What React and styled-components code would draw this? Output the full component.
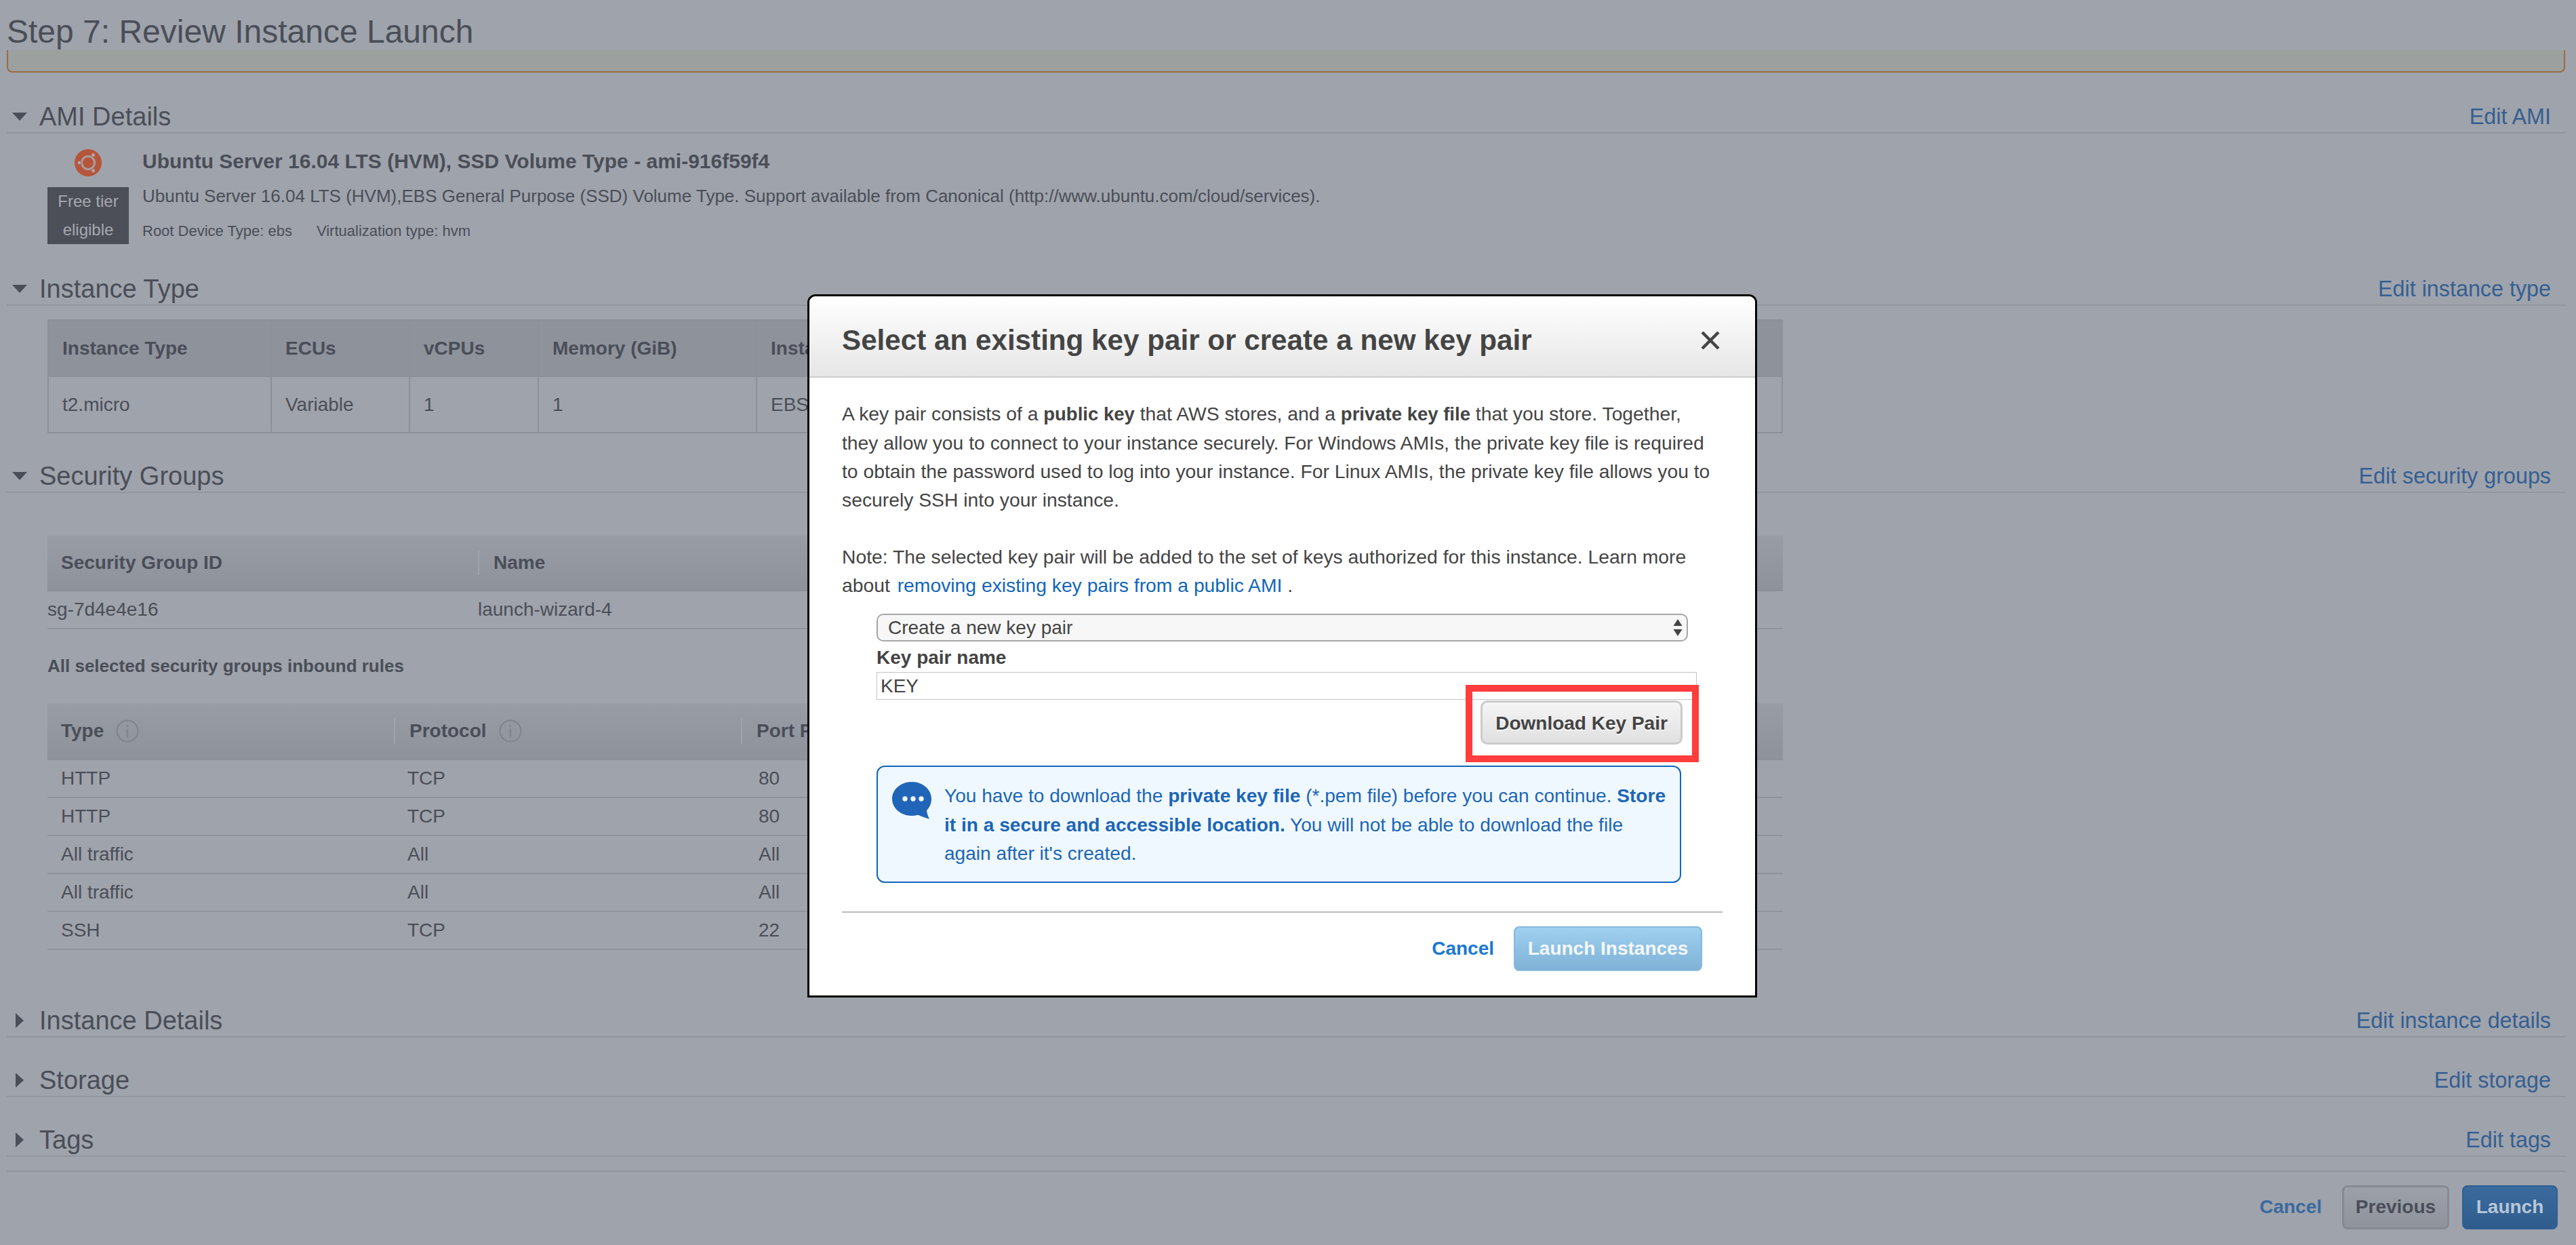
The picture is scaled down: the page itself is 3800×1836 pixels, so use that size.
import React from "react";
import styled, { createGlobalStyle } from "styled-components";

const GlobalStyle = createGlobalStyle`
  html, body {
    margin: 0;
    padding: 0;
    background: #9fa3ab;
  }
  * {
    box-sizing: border-box;
  }
`;

const instanceRows = [["t2.micro", "Variable", "1", "1", "EBS only"]];

const ruleRows = [
  ["HTTP", "TCP", "80"],
  ["HTTP", "TCP", "80"],
  ["All traffic", "All", "All"],
  ["All traffic", "All", "All"],
  ["SSH", "TCP", "22"],
];

const UbuntuLogo = () => (
  <LogoSvg viewBox="0 0 40 40">
    <circle cx="20" cy="20" r="20" fill="#b5563c" />
    <circle cx="20" cy="20" r="9.5" fill="none" stroke="#a99f9f" strokeWidth="3" />
    <circle cx="27.5" cy="8.5" r="3" fill="#b0a8a9" stroke="#b5563c" strokeWidth="1" />
    <circle cx="7" cy="20" r="3" fill="#b0a8a9" stroke="#b5563c" strokeWidth="1" />
    <circle cx="27.5" cy="31.5" r="3" fill="#b0a8a9" stroke="#b5563c" strokeWidth="1" />
  </LogoSvg>
);

const InfoIcon = () => (
  <InfoSvg viewBox="0 0 34 34">
    <circle cx="17" cy="17" r="15.5" fill="none" stroke="#80848d" strokeWidth="2" />
    <circle cx="17" cy="9.5" r="1.6" fill="#80848d" />
    <rect x="15.8" y="13.5" width="2.4" height="13" fill="#80848d" />
  </InfoSvg>
);

const BubbleIcon = () => (
  <BubbleSvg viewBox="0 0 58 55">
    <path
      d="M29 0C13 0 0 11 0 25c0 14 13 25 29 25 3 0 6-.4 9-1.200 4 1.500 9 3.700 17 6-2-4-3.500-8-4-12.500C55 38 58 32 58 25 58 11 45 0 29 0z"
      fill="#2065b8"
    />
    <circle cx="19" cy="25" r="3.700" fill="#f0f8ff" />
    <circle cx="31" cy="25" r="3.700" fill="#f0f8ff" />
    <circle cx="43" cy="25" r="3.700" fill="#f0f8ff" />
  </BubbleSvg>
);

const SelectArrows = () => (
  <ArrowsSvg viewBox="0 0 14 25">
    <path d="M7 0l6.500 10H.5z" fill="#444" />
    <path d="M7 25l6.500-10H.5z" fill="#444" />
  </ArrowsSvg>
);

const SectionHeader = ({ title, edit, open }) => (
  <Header>
    <ArrowSlot>
      <Arrow $open={open} />
    </ArrowSlot>
    <SectionTitle>{title}</SectionTitle>
    <EditLink>{edit}</EditLink>
  </Header>
);

const App = () => (
  <Page>
    <GlobalStyle />
    <PageTitle>Step 7: Review Instance Launch</PageTitle>
    <WarningBox />

    <Section>
      <SectionHeader title="AMI Details" edit="Edit AMI" open />
      <AmiBody>
        <AmiBadge>
          <UbuntuLogo />
          <FreeTier>
            Free tier
            <br />
            eligible
          </FreeTier>
        </AmiBadge>
        <AmiInfo>
          <AmiName>Ubuntu Server 16.04 LTS (HVM), SSD Volume Type - ami-916f59f4</AmiName>
          <AmiDesc>
            Ubuntu Server 16.04 LTS (HVM),EBS General Purpose (SSD) Volume Type. Support available
            from Canonical (http://www.ubuntu.com/cloud/services).
          </AmiDesc>
          <AmiMeta>
            <span>Root Device Type: ebs</span>
            <span>Virtualization type: hvm</span>
          </AmiMeta>
        </AmiInfo>
      </AmiBody>
    </Section>

    <Section>
      <SectionHeader title="Instance Type" edit="Edit instance type" open />
      <BoxedTable>
        <colgroup>
          <Col $w={329} />
          <Col $w={204} />
          <Col $w={190} />
          <Col $w={322} />
          <col />
        </colgroup>
        <thead>
          <tr>
            <BoxedTh>Instance Type</BoxedTh>
            <BoxedTh>ECUs</BoxedTh>
            <BoxedTh>vCPUs</BoxedTh>
            <BoxedTh>Memory (GiB)</BoxedTh>
            <BoxedTh>Instance Storage (GB)</BoxedTh>
          </tr>
        </thead>
        <tbody>
          {instanceRows.map((row) => (
            <tr key={row[0]}>
              {row.map((cell, i) => (
                <BoxedTd key={i}>{cell}</BoxedTd>
              ))}
            </tr>
          ))}
        </tbody>
      </BoxedTable>
    </Section>

    <Section>
      <SectionHeader title="Security Groups" edit="Edit security groups" open />
      <GroupTable>
        <colgroup>
          <Col $w={635} />
          <col />
        </colgroup>
        <thead>
          <tr>
            <GridTh>Security Group ID</GridTh>
            <GridTh $sep>Name</GridTh>
          </tr>
        </thead>
        <tbody>
          <tr>
            <GroupTd>sg-7d4e4e16</GroupTd>
            <GroupTd>launch-wizard-4</GroupTd>
          </tr>
        </tbody>
      </GroupTable>
      <RulesLabel>All selected security groups inbound rules</RulesLabel>
      <RulesTable>
        <colgroup>
          <Col $w={511} />
          <Col $w={512} />
          <col />
        </colgroup>
        <thead>
          <tr>
            <RulesTh>
              <ThInner>
                Type <InfoIcon />
              </ThInner>
            </RulesTh>
            <RulesTh $sep>
              <ThInner>
                Protocol <InfoIcon />
              </ThInner>
            </RulesTh>
            <RulesTh $sep>Port Range</RulesTh>
          </tr>
        </thead>
        <tbody>
          {ruleRows.map((row, i) => (
            <tr key={i}>
              <RulesTd>{row[0]}</RulesTd>
              <RulesTd>{row[1]}</RulesTd>
              <RulesTd $port>{row[2]}</RulesTd>
            </tr>
          ))}
        </tbody>
      </RulesTable>
    </Section>

    <CollapsedSection>
      <SectionHeader title="Instance Details" edit="Edit instance details" />
    </CollapsedSection>
    <Section>
      <SectionHeader title="Storage" edit="Edit storage" />
    </Section>
    <Section>
      <SectionHeader title="Tags" edit="Edit tags" />
    </Section>

    <PageFooter>
      <PageCancel>Cancel</PageCancel>
      <PreviousButton>Previous</PreviousButton>
      <LaunchButton>Launch</LaunchButton>
    </PageFooter>

    <Modal>
      <ModalHeader>
        <ModalTitle>Select an existing key pair or create a new key pair</ModalTitle>
        <CloseIcon viewBox="0 0 28 26">
          <path d="M2 1l24 24M26 1L2 25" stroke="#444" strokeWidth="4.400" fill="none" />
        </CloseIcon>
      </ModalHeader>
      <ModalBody>
        <Paragraph>
          A key pair consists of a <b>public key</b> that AWS stores, and a <b>private key file</b>{" "}
          that you store. Together,
          <br />
          they allow you to connect to your instance securely. For Windows AMIs, the private key
          file is required
          <br />
          to obtain the password used to log into your instance. For Linux AMIs, the private key
          file allows you to
          <br />
          securely SSH into your instance.
        </Paragraph>
        <Paragraph>
          Note: The selected key pair will be added to the set of keys authorized for this instance.
          Learn more
          <br />
          about <BodyLink>removing existing key pairs from a public AMI</BodyLink> .
        </Paragraph>

        <KeyForm>
          <FakeSelect>
            Create a new key pair
            <SelectArrows />
          </FakeSelect>
          <FieldLabel>Key pair name</FieldLabel>
          <FakeInput>KEY</FakeInput>
          <DownloadRow>
            <Highlight>
              <DownloadButton>Download Key Pair</DownloadButton>
            </Highlight>
          </DownloadRow>
          <InfoBox>
            <BubbleIcon />
            <InfoText>
              You have to download the <b>private key file</b> (*.pem file) before you can continue.{" "}
              <b>Store</b>
              <br />
              <b>it in a secure and accessible location.</b> You will not be able to download the
              file
              <br />
              again after it's created.
            </InfoText>
          </InfoBox>
        </KeyForm>

        <ModalFooter>
          <ModalCancel>Cancel</ModalCancel>
          <LaunchInstances>Launch Instances</LaunchInstances>
        </ModalFooter>
      </ModalBody>
    </Modal>
  </Page>
);

const Page = styled.div`
  position: relative;
  width: 3800px;
  height: 1836px;
  padding: 0 16px 0 10px;
  overflow: hidden;
  background: #9fa3ab;
  color: #4a4e58;
  font-family: "Liberation Sans", Arial, sans-serif;
`;

const PageTitle = styled.h1`
  margin: 0;
  height: 74px;
  padding-top: 21px;
  font-size: 48px;
  line-height: 52px;
  font-weight: 400;
`;

const WarningBox = styled.div`
  height: 33px;
  background: #9ca09e;
  border: 2px solid #9a6c44;
  border-top: none;
  border-radius: 0 0 8px 8px;
  margin-bottom: 30px;
`;

const Section = styled.section`
  margin-bottom: 28px;
`;

const CollapsedSection = styled(Section)`
  margin-top: 69px;
`;

const Header = styled.div`
  display: flex;
  align-items: center;
  height: 60px;
  padding: 12px 21px 0 0;
  border-bottom: 2px solid #92969f;
`;

const ArrowSlot = styled.div`
  display: flex;
  justify-content: center;
  width: 23px;
  margin: 0 18px 0 7px;
`;

const Arrow = styled.i`
  display: block;
  width: 0;
  height: 0;
  border-style: solid;
  ${(p) =>
    p.$open
      ? `border-width: 12px 11.5px 0 11.5px; border-color: #4a4e58 transparent transparent transparent;`
      : `border-width: 11.5px 0 11.5px 12px; border-color: transparent transparent transparent #4a4e58;`}
`;

const SectionTitle = styled.h2`
  flex: 1;
  margin: 0;
  font-size: 38px;
  line-height: 48px;
  font-weight: 400;
`;

const EditLink = styled.a`
  color: #355f92;
  font-size: 32.3px;
  line-height: 48px;
`;

const AmiBody = styled.div`
  display: flex;
  height: 166px;
  padding: 23px 0 0 60px;
`;

const AmiBadge = styled.div`
  display: flex;
  flex-direction: column;
  align-items: center;
  gap: 16px;
  width: 120px;
  margin-right: 20px;
`;

const LogoSvg = styled.svg`
  display: block;
  width: 40px;
  height: 40px;
`;

const FreeTier = styled.div`
  width: 120px;
  height: 84px;
  background: #4c4f58;
  color: #a6a9b0;
  font-size: 24px;
  line-height: 42px;
  text-align: center;
`;

const AmiInfo = styled.div`
  display: flex;
  flex-direction: column;
`;

const AmiName = styled.div`
  height: 36px;
  font-size: 30px;
  line-height: 36px;
  font-weight: 700;
`;

const AmiDesc = styled.div`
  margin-top: 15px;
  font-size: 26px;
  line-height: 36px;
`;

const AmiMeta = styled.div`
  display: flex;
  gap: 36px;
  margin-top: 18px;
  font-size: 22px;
  line-height: 32px;
`;

const Col = styled.col`
  width: ${(p) => p.$w}px;
`;

const BoxedTable = styled.table`
  width: 2560px;
  margin: 20px 0 0 60px;
  table-layout: fixed;
  border-collapse: collapse;
  font-size: 28px;
`;

const BoxedTh = styled.th`
  height: 83px;
  padding: 0 20px;
  border: 2px solid #8c9099;
  background: #8e929b;
  text-align: left;
  font-weight: 700;
`;

const BoxedTd = styled.td`
  height: 83px;
  padding: 0 20px;
  border: 2px solid #8c9099;
`;

const GroupTable = styled.table`
  width: 2560px;
  margin: 63px 0 0 60px;
  table-layout: fixed;
  border-collapse: collapse;
  font-size: 28px;
`;

const GridTh = styled.th`
  position: relative;
  height: 81px;
  padding: 0 0 0 ${(p) => (p.$sep ? "23px" : "20px")};
  background: linear-gradient(#989ca5, #8e929b);
  border-bottom: 2px solid #8c9099;
  text-align: left;
  font-weight: 700;
  ${(p) =>
    p.$sep &&
    `&::before {
      content: "";
      position: absolute;
      left: 0;
      top: 22px;
      bottom: 22px;
      width: 2px;
      background: #a0a4ac;
    }`}
`;

const GroupTd = styled.td`
  height: 56px;
  padding: 0;
  border-bottom: 2px solid #8f939c;
`;

const RulesLabel = styled.div`
  margin: 38px 0 0 60px;
  font-size: 26px;
  line-height: 32px;
  font-weight: 700;
`;

const RulesTable = styled(GroupTable)`
  margin-top: 39px;
`;

const RulesTh = styled(GridTh)`
  height: 83px;
`;

const ThInner = styled.span`
  display: inline-flex;
  align-items: center;
  gap: 18px;
`;

const InfoSvg = styled.svg`
  display: block;
  width: 34px;
  height: 34px;
`;

const RulesTd = styled.td`
  height: 56px;
  padding: 0 0 0 ${(p) => (p.$port ? "26px" : "20px")};
  border-bottom: 2px solid #8f939c;
`;

const PageFooter = styled.div`
  display: flex;
  justify-content: flex-end;
  align-items: center;
  height: 86px;
  margin-top: -8px;
  padding: 20px 11px 0 0;
  border-top: 2px solid #92969f;
`;

const PageCancel = styled.a`
  margin-right: 30px;
  color: #3a6a9f;
  font-size: 28px;
  font-weight: 700;
`;

const PageButton = styled.button`
  height: 65px;
  padding: 0;
  border-radius: 8px;
  font-family: inherit;
  font-size: 28px;
  font-weight: 700;
`;

const PreviousButton = styled(PageButton)`
  width: 158px;
  margin-right: 19px;
  background: linear-gradient(#9ca0a9, #8f939c);
  border: 3px solid #868a93;
  color: #4a4e58;
`;

const LaunchButton = styled(PageButton)`
  width: 141px;
  background: linear-gradient(#3b6a9e, #2f5d8d);
  border: 2px solid #2d5e96;
  color: #b8c6d8;
`;

const Modal = styled.div`
  position: absolute;
  left: 1191px;
  top: 434px;
  width: 1401px;
  height: 1037px;
  display: flex;
  flex-direction: column;
  border: 3px solid #000;
  border-radius: 12px 12px 0 0;
  background: #fff;
  color: #444;
`;

const ModalHeader = styled.div`
  display: flex;
  align-items: center;
  justify-content: space-between;
  height: 120px;
  padding: 12px 52px 0 48px;
  background: linear-gradient(#fff, #e6e6e6);
  border-bottom: 2px solid #ccc;
  border-radius: 9px 9px 0 0;
`;

const ModalTitle = styled.h3`
  margin: 0;
  font-size: 42.2px;
  font-weight: 700;
`;

const CloseIcon = styled.svg`
  display: block;
  width: 28px;
  height: 26px;
`;

const ModalBody = styled.div`
  flex: 1;
  padding: 32px 48px 0;
`;

const Paragraph = styled.p`
  margin: 0 0 42px;
  font-size: 28.3px;
  line-height: 42px;
  white-space: nowrap;
  b {
    font-size: 27.5px;
  }
  &:nth-of-type(2) {
    margin-bottom: 21px;
  }
`;

const BodyLink = styled.a`
  margin-left: 3px;
  color: #1166bb;
`;

const KeyForm = styled.div`
  margin-left: 51px;
`;

const FakeSelect = styled.div`
  display: flex;
  align-items: center;
  justify-content: space-between;
  width: 1197px;
  height: 41px;
  padding: 0 6px 0 15px;
  background: #f7f7f7;
  border: 2px solid #a6a6a6;
  border-radius: 10px;
  font-size: 28px;
`;

const ArrowsSvg = styled.svg`
  display: block;
  width: 14px;
  height: 25px;
`;

const FieldLabel = styled.div`
  height: 45px;
  font-size: 28px;
  line-height: 47px;
  font-weight: 700;
`;

const FakeInput = styled.div`
  width: 1210px;
  height: 41px;
  padding-left: 5px;
  border: 1px solid #c4c4c4;
  font-size: 28px;
  line-height: 39px;
`;

const DownloadRow = styled.div`
  display: flex;
  justify-content: flex-end;
  width: 1189px;
  margin-top: 1px;
`;

const Highlight = styled.div`
  position: relative;
  &::after {
    content: "";
    position: absolute;
    inset: -23px -24px -26px -22px;
    border: 10px solid #ff3d3d;
    pointer-events: none;
  }
`;

const DownloadButton = styled.button`
  display: block;
  width: 298px;
  height: 65px;
  padding: 2px 0 0;
  background: linear-gradient(#f5f5f5, #e0e0e0);
  border: 3px solid #cbcbcb;
  border-radius: 10px;
  color: #444;
  font-family: inherit;
  font-size: 28px;
  font-weight: 700;
  text-shadow: 0 2px 0 #fff;
`;

const InfoBox = styled.div`
  display: flex;
  gap: 19px;
  width: 1187px;
  height: 173px;
  margin-top: 31px;
  padding: 22px 0 0 21px;
  background: #f0f8ff;
  border: 2px solid #1166bb;
  border-radius: 12px;
`;

const BubbleSvg = styled.svg`
  display: block;
  flex: none;
  width: 58px;
  height: 55px;
`;

const InfoText = styled.div`
  color: #1c66b6;
  font-size: 28.1px;
  line-height: 42.5px;
  white-space: nowrap;
`;

const ModalFooter = styled.div`
  display: flex;
  align-items: center;
  justify-content: flex-end;
  height: 88px;
  margin-top: 42px;
  padding: 19px 30px 0 0;
  border-top: 2px solid #bbb;
`;

const ModalCancel = styled.a`
  margin-right: 29px;
  color: #1a78d2;
  font-size: 28px;
  font-weight: 700;
`;

const LaunchInstances = styled.button`
  width: 278px;
  height: 66px;
  padding: 0;
  background: linear-gradient(#9fd0f0, #7fb2d6);
  border: 2px solid #86b9dc;
  border-radius: 8px;
  color: #f4f8fb;
  font-family: inherit;
  font-size: 28px;
  font-weight: 700;
`;

export default App;
